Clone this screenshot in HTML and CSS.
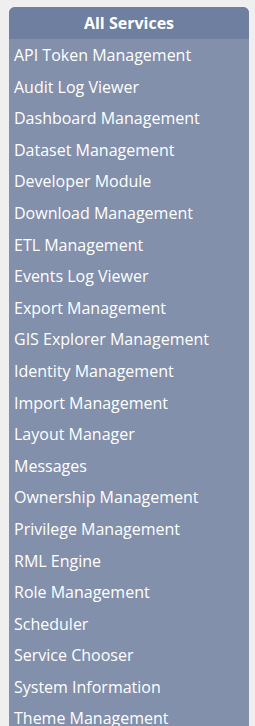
FILE: index.html
```html
<!DOCTYPE html>
<html>
<head>
<meta charset="utf-8">
<link rel="stylesheet" href="styles.css">
</head>
<body>
<div class="panel">
  <div class="header">All Services</div>
  <ul class="list">
    <li>API Token Management</li>
    <li>Audit Log Viewer</li>
    <li>Dashboard Management</li>
    <li>Dataset Management</li>
    <li>Developer Module</li>
    <li>Download Management</li>
    <li>ETL Management</li>
    <li>Events Log Viewer</li>
    <li>Export Management</li>
    <li>GIS Explorer Management</li>
    <li>Identity Management</li>
    <li>Import Management</li>
    <li>Layout Manager</li>
    <li>Messages</li>
    <li>Ownership Management</li>
    <li>Privilege Management</li>
    <li>RML Engine</li>
    <li>Role Management</li>
    <li>Scheduler</li>
    <li>Service Chooser</li>
    <li>System Information</li>
    <li>Theme Management</li>
  </ul>
</div>
</body>
</html>
```
FILE: styles.css
```css
html, body {
  margin: 0;
  padding: 0;
  background: #efefef;
  overflow: hidden;
}
body {
  padding: 7px 6px 0 9px;
  font-family: "Open Sans", sans-serif;
  color: #ffffff;
}
.panel {
  width: 240px;
  background: #8290ab;
  border-radius: 6px 6px 0 0;
  overflow: hidden;
}
.header {
  background: #6e7f9f;
  height: 32px;
  line-height: 32px;
  text-align: center;
  font-weight: bold;
  font-size: 16px;
}
.list {
  list-style: none;
  margin: 0;
  padding: 1px 0 0 5px;
}
.list li {
  font-size: 16px;
  height: 31.6px;
  line-height: 31.6px;
  white-space: nowrap;
}
```
